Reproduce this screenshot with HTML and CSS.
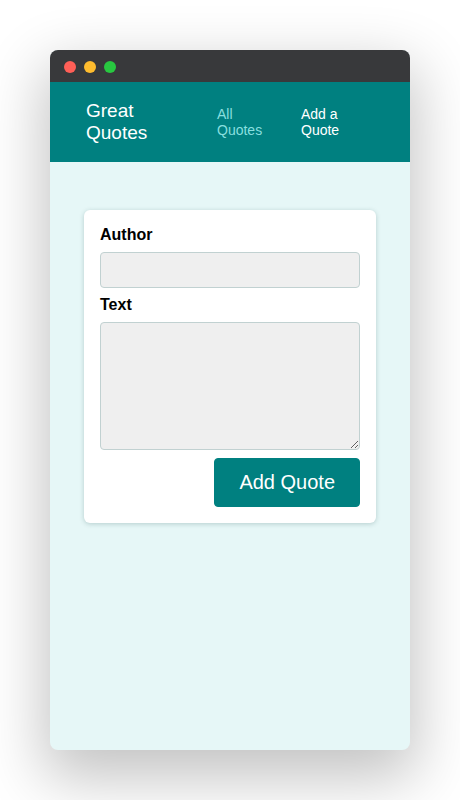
FILE: index.html
```
<!DOCTYPE html>
<html lang="en">
<head>
<meta charset="utf-8">
<title>Great Quotes</title>
<link rel="stylesheet" href="styles.css">
</head>
<body>
<div class="window">
  <div class="titlebar">
    <span class="dot red"></span>
    <span class="dot yellow"></span>
    <span class="dot green"></span>
  </div>
  <header class="header">
    <div class="logo">Great Quotes</div>
    <nav class="nav">
      <ul>
        <li class="nav-all"><a href="#">All Quotes</a></li>
        <li class="nav-add"><a href="#" class="active">Add a Quote</a></li>
      </ul>
    </nav>
  </header>
  <main class="main">
    <form class="card form">
      <div class="control">
        <label for="author">Author</label>
        <input type="text" id="author">
      </div>
      <div class="control">
        <label for="text">Text</label>
        <textarea id="text"></textarea>
      </div>
      <div class="actions">
        <button type="button" class="btn">Add Quote</button>
      </div>
    </form>
  </main>
</div>
</body>
</html>
```
FILE: styles.css
```
* { box-sizing: border-box; }
html, body {
  margin: 0;
  padding: 0;
  background: #ffffff;
  font-family: "Liberation Sans", Arial, sans-serif;
}
body {
  padding: 50px 50px 50px 50px;
}
.window {
  width: 360px;
  height: 700px;
  border-radius: 8px;
  overflow: hidden;
  background: #e6f7f7;
  box-shadow: 0 22px 60px 6px rgba(0, 0, 0, 0.24);
  display: flex;
  flex-direction: column;
}
.titlebar {
  height: 32px;
  background: #38393b;
  display: flex;
  align-items: center;
  gap: 8px;
  padding: 2px 0 0 14px;
  flex: none;
}
.dot {
  width: 12px;
  height: 12px;
  border-radius: 50%;
}
.red { background: #ff5f57; }
.yellow { background: #febc2e; }
.green { background: #28c840; }
.header {
  height: 80px;
  flex: none;
  background: #008080;
  display: flex;
  align-items: center;
  padding: 0 0 0 36px;
}
.logo {
  width: 131px;
  flex: none;
  font-size: 19px;
  line-height: 22px;
  color: #ffffff;
  padding-right: 60px;
}
.nav ul {
  list-style: none;
  margin: 0;
  padding: 0;
  display: flex;
  align-items: baseline;
  gap: 38px;
}
.nav li {
  font-size: 14px;
  line-height: 16px;
}
.nav-all { width: 46px; }
.nav-add { width: 46px; }
.nav a {
  text-decoration: none;
  color: #88dfdf;
}
.nav a.active { color: #ffffff; }
.main {
  flex: 1;
  padding: 48px 34px;
}
.card {
  background: #ffffff;
  border-radius: 6px;
  box-shadow: 0 1px 5px rgba(0, 60, 60, 0.22);
}
.form {
  padding: 16px;
  margin: 0;
}
.control {
  margin-bottom: 8px;
}
.control label {
  display: block;
  font-weight: bold;
  font-size: 16px;
  line-height: 18px;
  margin-bottom: 8px;
  color: #000;
}
.control input,
.control textarea {
  display: block;
  width: 100%;
  font: inherit;
  background: #efefef;
  border: 1px solid #c1d1d1;
  border-radius: 4px;
  padding: 6px;
  margin: 0;
}
.control input { height: 36px; }
.control textarea { height: 128px; resize: vertical; }
.actions {
  display: flex;
  justify-content: flex-end;
}
.btn {
  font-family: inherit;
  font-size: 20px;
  line-height: 23px;
  height: 49px;
  padding: 12px 24px;
  border-radius: 4px;
  background: #008080;
  color: #ffffff;
  border: 1px solid #008080;
  cursor: pointer;
}
```
